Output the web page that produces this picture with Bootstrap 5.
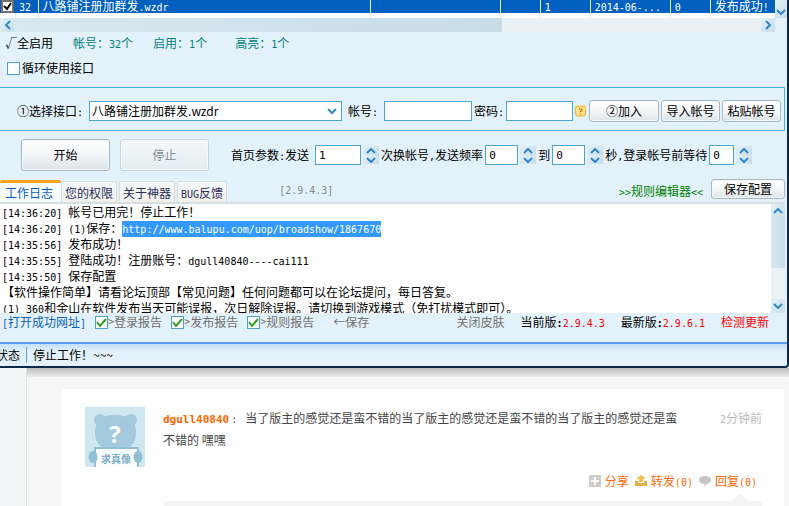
<!DOCTYPE html>
<html lang="zh-CN">
<head>
<meta charset="utf-8">
<meta name="viewport" content="width=device-width, initial-scale=1">
<title>工作日志</title>
<link href="https://cdn.jsdelivr.net/npm/bootstrap@5.3.0/dist/css/bootstrap.min.css" rel="stylesheet">
<style>
:root{--edge:#4aa6d8;--sky:#e3f2fa;--cn:"Noto Sans CJK SC",sans-serif;--en:"DejaVu Sans Mono","Noto Sans CJK SC",monospace}
body{font:12px/16px var(--cn);color:#000;background:#f7f7f7;overflow:hidden}
a{text-decoration:none}
svg{display:block;flex:none}
.en{font-family:var(--en);font-size:10px;line-height:10px}
.nowrap{white-space:nowrap}
.app{background:var(--sky);border-right:2px solid #0d2848;border-bottom:2px solid #0d2848;border-bottom-right-radius:4px;overflow:hidden}
/* account grid */
.grid{table-layout:fixed;width:100%;color:#fff;line-height:11px}
.grid td{height:13px;padding:0 0 0 4px;background:#0060c0;border-right:1px solid #e8eef4;white-space:nowrap;vertical-align:top}
.grid tr+tr td{height:5px;padding:0;background:#fff}
.grid td:last-child{border-right:0}
.grid .pick{padding:0 0 0 1px;border-right:0}
.w-pick{width:15px}.w-no{width:23px}.w-wide{width:130px}.w-num{width:40px}.w-one{width:50px}.w-date{width:80px}.w-res{width:65px}
.sb-btn{border:0;padding:0;background:linear-gradient(135deg,#e4f0f6,#c8dde8);display:flex;align-items:center;justify-content:center}
.hbar{height:14px;background:#e9f1f5;margin-right:12px}
.hthumb{width:63%;background:linear-gradient(90deg,#d8e8ef,#c8dce7)}
.hbar .sb-btn{width:14px}
.vend{width:12px;height:18px;align-items:flex-end;padding-bottom:3px}
.tick{appearance:none;width:13px;height:13px;margin:0;border:1px solid #4ca0d0;background:#fff;flex:none}
.tick:checked{background:#fff url("data:image/svg+xml,%3Csvg xmlns='http://www.w3.org/2000/svg' viewBox='0 0 11 11'%3E%3Cpath d='M1 5l3 4 6-7' fill='none' stroke='%2333a01c' stroke-width='2'/%3E%3C/svg%3E") center/11px no-repeat}
.tick.dark:checked{border:2px solid #707070;background-image:url("data:image/svg+xml,%3Csvg xmlns='http://www.w3.org/2000/svg' viewBox='0 0 11 11'%3E%3Cpath d='M2 5l3 3 4-6' fill='none' stroke='%23000' stroke-width='2'/%3E%3C/svg%3E")}
.counts{padding:3px 5px 0;height:24px}
.teal{color:#008080}
.s20{margin-left:20px}
.loop{padding:4px 7px 0;height:31px}
.loop label{gap:2px}
/* interface chooser */
.chooser{border:1px solid #3fb0e0;border-left:0;margin-right:2px;padding:12px 3px 8px 17px;gap:2px}
.box{height:20px;border:1px solid var(--edge);border-radius:0;background:#fff;padding:0 3px;font:11px/18px var(--en);color:#000;min-width:0}
.picker{appearance:none;flex:1;margin:0 4px;font:12px/18px var(--cn);padding:0 2px;background:#fff url("data:image/svg+xml,%3Csvg xmlns='http://www.w3.org/2000/svg' viewBox='0 0 10 8'%3E%3Cpath d='M1 2l4 4 4-4' fill='none' stroke='%232f86cf' stroke-width='2'/%3E%3C/svg%3E") right 4px center/10px 8px no-repeat}
.w88{width:88px;margin-left:4px}.w67{width:67px}.w46{width:46px}.w33{width:33px}.w25{width:25px}
.skin{border:1px solid #a8b8c2;border-radius:3px;background:linear-gradient(#fff,#f4f6f7 50%,#dbe3e8);padding:0;font-size:12px;line-height:20px;color:#000;flex:none;box-shadow:inset 0 0 0 1px #f5f8fa}
.b70{width:70px;margin-left:1px}.b59{width:59px}.b74{width:74px;line-height:18px}
.big{width:89px;line-height:30px}
.big:disabled{border-color:#c6d5de;background:linear-gradient(#f4f9fb,#e2ecf1);color:#808890;opacity:1}
.runrow{padding:8px 0 8px 21px}
.runrow .big+.big{margin-left:10px}
.params{gap:2px;margin-left:22px}
.spin{width:16px}
.spin .sb-btn{height:9px;width:16px}
/* tabs */
.logtabs{border:0;border-bottom:2px solid #d3dfe3;margin-right:2px;align-items:flex-end;flex-wrap:nowrap;height:25px}
.logtabs .nav-link{border:1px solid #d2dcd9;border-bottom:0;border-radius:2px 2px 0 0;background:linear-gradient(#f4f8fa,#f0f0e8);color:#2c2c5c;padding:2px 3px 1px;line-height:17px;margin:0 2px 0 0}
.logtabs .nav-link.active{border:0;border-top:3px solid #f5a31c;background:#f7fbfe;color:#0a5cb8;padding:1px 8px 1px 5px;margin:0}
.ver{margin-left:50px;color:#888}
.green{color:#008000}
.logwrap{height:109px;background:#fff;margin-right:2px}
.logtext{padding-left:2px;white-space:nowrap;overflow:hidden}
.sel{background:#3399ff;color:#fff;padding:3px 0 2px}
.vbar{width:14px;background:#eaf2f6;flex:none}
.vbar .sb-btn{width:14px;height:14px}
.vthumb{height:50px;background:linear-gradient(90deg,#d8e8ef,#c8dce7)}
.foot{height:29px;padding:1px 18px 0 2px;color:#707070;line-height:16px}
.foot label{display:flex;align-items:center;margin-left:9px}
.blue{color:#0a62b8}.red{color:#f00}.grey{color:#707070}
.mid{margin-left:19px}
.stat{height:24px;border-top:2px solid #5b9bf0;background:linear-gradient(#c3dffa,var(--sky) 7px);line-height:16px}
.stat .state{margin-left:-4px;border-right:1px solid #5aa0dc;padding-right:6px;margin-right:6px}
/* web page behind */
.rail{width:27px;background:#f3f6f6;border-right:1px solid #e0e3e3;flex:none}
.shade{height:9px;background:linear-gradient(#bcbcbc,#ededed)}
.post{background:#fff;margin:12px 5px 0 35px;padding:18px 22px 0 23px;height:117px}
.words{line-height:22px;color:#444;margin-left:18px;padding-right:38px}
.who{font:bold 11px/12px var(--en);color:#f60;margin-right:2px}
.ago{color:#bbb;line-height:22px}
.acts{gap:4px;padding-right:5px;height:16px;margin-top:6px}
.acts a{color:#f60;margin-right:2px}
.reply{margin:4px 0 0 79px}
.caret{display:block;margin:0 14px 0 auto}
.replybox{height:8px;background:#f3f3f3}
</style>
<script src="https://cdn.jsdelivr.net/npm/bootstrap@5.3.0/dist/js/bootstrap.bundle.min.js"></script>
</head>
<body>
<svg width="0" height="0" class="position-absolute" aria-hidden="true">
<symbol id="up" viewBox="0 0 10 6"><path d="M1 5l4-4 4 4" fill="none" stroke="#2f86cf" stroke-width="2"/></symbol>
<symbol id="down" viewBox="0 0 10 6"><path d="M1 1l4 4 4-4" fill="none" stroke="#2f86cf" stroke-width="2"/></symbol>
</svg>
<main class="app">
<div class="d-flex align-items-start">
<table class="grid flex-fill"><colgroup><col class="w-pick"><col class="w-no"><col><col class="w-wide"><col class="w-num"><col class="w-one"><col class="w-date"><col class="w-num"><col class="w-res"></colgroup>
<tbody><tr><td class="pick"><input class="tick dark d-block" type="checkbox" checked aria-label="32"></td><td><span class="en">32</span></td><td>八路铺注册加群发<span class="en">.wzdr</span></td><td></td><td></td><td><span class="en">1</span></td><td><span class="en">2014-06-...</span></td><td><span class="en">0</span></td><td>发布成功<span class="en">!</span></td></tr>
<tr><td></td><td></td><td></td><td></td><td></td><td></td><td></td><td></td><td></td></tr></tbody></table>
<button class="sb-btn vend" aria-label="向下"><svg width="10" height="6"><use href="#down"/></svg></button>
</div>
<div class="hbar d-flex"><button class="sb-btn" aria-label="向左"><svg width="7" height="10" viewBox="0 0 7 10"><path d="M6 1L2 5l4 4" fill="none" stroke="#2f86cf" stroke-width="2"/></svg></button><div class="hthumb"></div><button class="sb-btn ms-auto" aria-label="向右"><svg width="7" height="10" viewBox="0 0 7 10"><path d="M1 1l4 4-4 4" fill="none" stroke="#2f86cf" stroke-width="2"/></svg></button></div>
<div class="counts d-flex teal"><span class="text-black">√全启用</span><span class="s20">帐号：<span class="en">32</span>个</span><span class="s20">启用：<span class="en">1</span>个</span><span class="s20 ps-2">高亮：<span class="en">1</span>个</span></div>
<div class="loop"><label class="d-flex align-items-center"><input type="checkbox" class="tick">循环使用接口</label></div>
<form class="chooser d-flex align-items-center">
<label class="nowrap" for="api">①选择接口<span class="en">:</span></label>
<select id="api" class="box picker"><option>八路铺注册加群发.wzdr</option></select>
<label class="nowrap" for="acc">帐号<span class="en">:</span></label><input id="acc" class="box w88">
<label class="nowrap" for="pwd">密码<span class="en">:</span></label><input id="pwd" type="password" class="box w67">
<svg width="11" height="12" viewBox="0 0 11 12"><rect x=".5" y="1" width="10" height="10" rx="2" fill="#ffe08a" stroke="#f0b030"/><path d="M4 4h3v2H5.500v1M5 9h1" fill="none" stroke="#b87800"/></svg>
<button type="button" class="skin b70">②加入</button><button type="button" class="skin b59">导入帐号</button><button type="button" class="skin b59">粘贴帐号</button>
</form>
<form class="runrow d-flex align-items-center nowrap">
<button type="button" class="skin big">开始</button><button type="button" class="skin big" disabled>停止</button>
<div class="params d-flex align-items-center">
<label for="n1">首页参数<span class="en">:</span>发送</label><input id="n1" class="box w46 ms-1" value="1">
<span class="spin d-grid"><button type="button" class="sb-btn" aria-label="加"><svg width="10" height="6"><use href="#up"/></svg></button><button type="button" class="sb-btn" aria-label="减"><svg width="10" height="6"><use href="#down"/></svg></button></span>
<label for="n2">次换帐号<span class="en">,</span>发送频率</label><input id="n2" class="box w33" value="0">
<span class="spin d-grid"><button type="button" class="sb-btn" aria-label="加"><svg width="10" height="6"><use href="#up"/></svg></button><button type="button" class="sb-btn" aria-label="减"><svg width="10" height="6"><use href="#down"/></svg></button></span>
<label for="n3">到</label><input id="n3" class="box w33" value="0">
<span class="spin d-grid"><button type="button" class="sb-btn" aria-label="加"><svg width="10" height="6"><use href="#up"/></svg></button><button type="button" class="sb-btn" aria-label="减"><svg width="10" height="6"><use href="#down"/></svg></button></span>
<label for="n4">秒<span class="en">,</span>登录帐号前等待</label><input id="n4" class="box w25" value="0">
<span class="spin d-grid"><button type="button" class="sb-btn" aria-label="加"><svg width="10" height="6"><use href="#up"/></svg></button><button type="button" class="sb-btn" aria-label="减"><svg width="10" height="6"><use href="#down"/></svg></button></span>
</div></form>
<nav class="nav nav-tabs logtabs nowrap">
<a class="nav-link active" href="#log">工作日志</a><a class="nav-link" href="#auth">您的权限</a><a class="nav-link" href="#about">关于神器</a><a class="nav-link" href="#bug"><span class="en">BUG</span>反馈</a>
<span class="ver en align-self-center">[2.9.4.3]</span>
<a class="green ms-auto me-2 align-self-center" href="#rules"><span class="en">&gt;&gt;</span>规则编辑器<span class="en">&lt;&lt;</span></a>
<button type="button" class="skin b74 align-self-start">保存配置</button>
</nav>
<div class="logwrap d-flex" id="log">
<div class="logtext flex-fill">
<div><span class="en">[14:36:20] </span>帐号已用完！停止工作！</div>
<div><span class="en">[14:36:20] (1)</span>保存：<span class="en sel">http://www.balupu.com/uop/broadshow/1867670</span></div>
<div><span class="en">[14:35:56] </span>发布成功！</div>
<div><span class="en">[14:35:55] </span>登陆成功！注册账号：<span class="en">dgull40840----cai111</span></div>
<div><span class="en">[14:35:50] </span>保存配置</div>
<div>【软件操作简单】请看论坛顶部【常见问题】任何问题都可以在论坛提问，每日答复。</div>
<div><span class="en">(1) 360</span>和金山在软件发布当天可能误报，次日解除误报。请切换到游戏模式（免打扰模式即可）。</div>
</div>
<div class="vbar d-flex flex-column"><button class="sb-btn" aria-label="向上"><svg width="10" height="6"><use href="#up"/></svg></button><div class="vthumb"></div><button class="sb-btn mt-auto" aria-label="向下"><svg width="10" height="6"><use href="#down"/></svg></button></div>
</div>
<div class="foot d-flex align-items-start nowrap">
<a class="blue" href="#open"><span class="en">[</span>打开成功网址<span class="en">]</span></a>
<label><input type="checkbox" class="tick" checked><span class="en">&gt;</span>登录报告</label><label><input type="checkbox" class="tick" checked><span class="en">&gt;</span>发布报告</label><label><input type="checkbox" class="tick" checked><span class="en">&gt;</span>规则报告</label>
<span class="mid">←保存</span><a class="grey ms-auto" href="#skin">关闭皮肤</a>
<span class="text-black ms-3">当前版<b class="en">:</b><span class="red en">2.9.4.3</span></span><span class="text-black ms-3">最新版<b class="en">:</b><span class="red en">2.9.6.1</span></span><a class="red ms-3" href="#update">检测更新</a>
</div>
<div class="stat d-flex align-items-center nowrap"><span class="state">状态</span><span>停止工作！~~~</span></div>
</main>
<div class="d-flex"><div class="rail"></div>
<div class="flex-fill"><div class="shade"></div>
<article class="post">
<div class="d-flex">
<svg width="60" height="60" viewBox="0 0 60 60" role="img" aria-label="头像"><path fill="#cfe7ee" d="M0 0h60v60H0z"/><g fill="#a2c9dd"><circle cx="15" cy="13" r="6"/><circle cx="46" cy="13" r="6"/><path d="M30 8c15 0 21 7 21 18 0 9-5 14-11 16H20C14 39 10 34 10 26 10 15 16 8 30 8z"/></g><path fill="#f8fcfe" stroke="#92bfd5" stroke-width="2" d="M10 41h43v21H10z"/><g fill="#92bfd5"><ellipse cx="8" cy="50" rx="4.500" ry="6"/><ellipse cx="53" cy="50" rx="4.500" ry="6"/></g><text x="30" y="36" text-anchor="middle" font-family="Open Sans,sans-serif" font-weight="700" font-size="24" fill="#fff">?</text><text x="31" y="56" text-anchor="middle" font-family="Noto Sans CJK SC,sans-serif" font-weight="700" font-size="10" fill="#7fadc5">求真像</text></svg>
<div class="words flex-fill"><a class="who" href="#user">dgull40840</a><span class="en me-2">:</span>当了版主的感觉还是蛮不错的当了版主的感觉还是蛮不错的当了版主的感觉还是蛮不错的 嘿嘿</div>
<span class="ago nowrap"><span class="en">2</span>分钟前</span>
</div>
<div class="acts d-flex align-items-center justify-content-end nowrap">
<svg width="12" height="12" viewBox="0 0 12 12"><rect width="12" height="12" rx="1" fill="#ccc"/><path d="M6 2v8M2 6h8" stroke="#fff" stroke-width="2"/></svg><a href="#share">分享</a>
<svg width="12" height="12" viewBox="0 0 12 12"><path d="M6 0l5 4H8v3H4V4H1z" fill="#f3bd48"/><path d="M0 6h3v2h6V6h3v5H0z" fill="#e5ad4a"/></svg><a href="#forward">转发<span class="en">(0)</span></a>
<svg width="12" height="12" viewBox="0 0 12 12"><path d="M6 1c4 0 6 2 6 4S10 9 7 9l-1 3-1-3C2 9 0 7 0 5s2-4 6-4z" fill="#c6c6c6"/></svg><a class="me-0" href="#reply">回复<span class="en">(0)</span></a>
</div>
<div class="reply"><svg class="caret" width="16" height="8" viewBox="0 0 16 8"><path d="M0 8l8-8 8 8z" fill="#f3f3f3"/></svg><div class="replybox"></div></div>
</article></div></div>
</body>
</html>
